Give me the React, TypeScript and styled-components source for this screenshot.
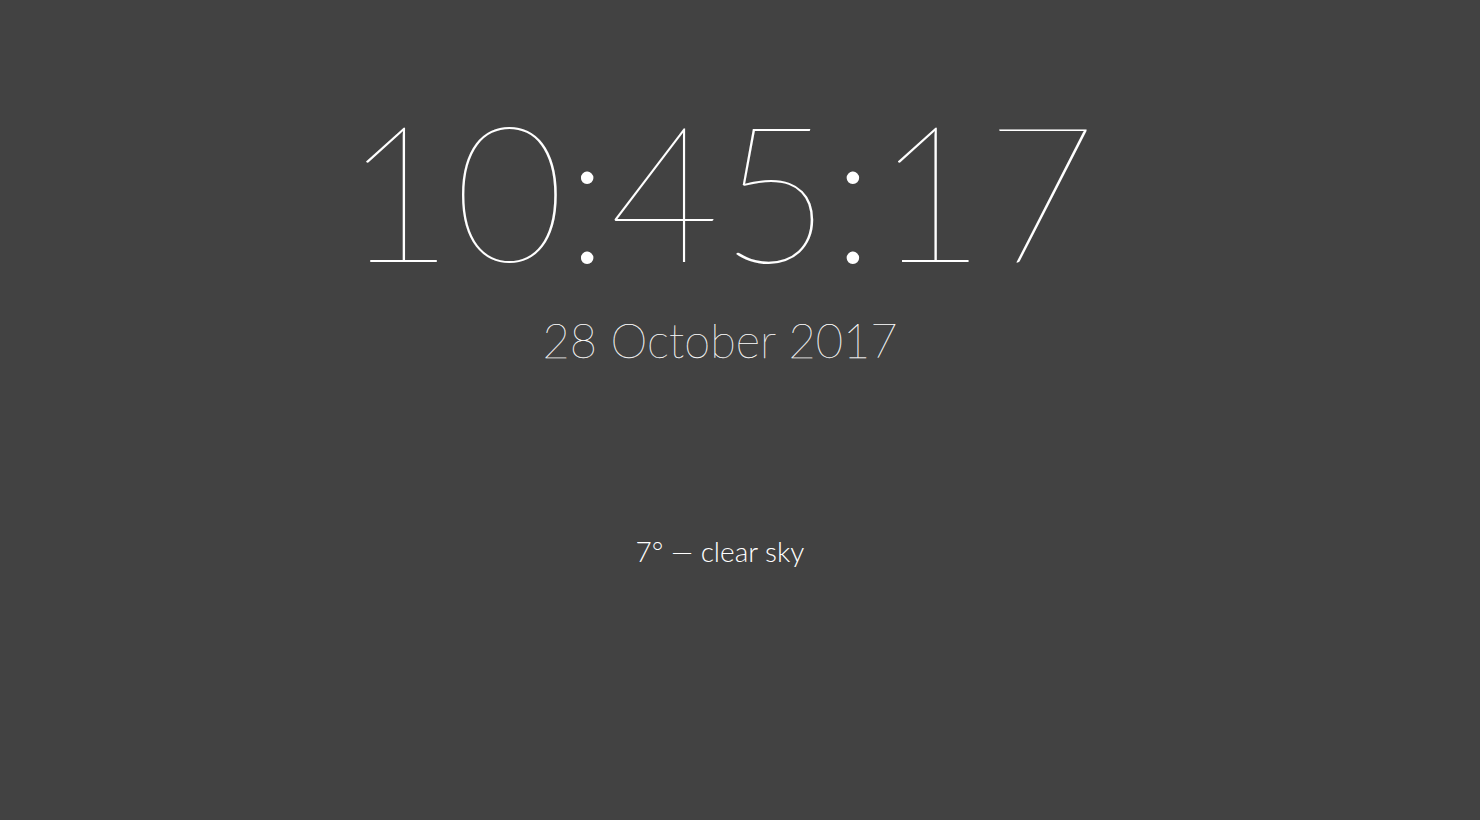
import React from 'react';
import styled, { createGlobalStyle } from 'styled-components';

const GlobalStyle = createGlobalStyle`
  html, body {
    margin: 0;
    padding: 0;
    height: 100%;
    background: #424242;
  }
  body {
    font-family: Lato, "Open Sans", sans-serif;
    color: #ffffff;
  }
`;

const Screen = styled.main`
  width: 1440px;
  height: 820px;
  display: flex;
  flex-direction: column;
  align-items: center;
  background: #424242;
`;

const Clock = styled.div`
  margin-top: 93px;
  font-size: 191px;
  font-weight: 100;
  line-height: 1;
`;

const DateLine = styled.div`
  margin-top: 33px;
  font-size: 47px;
  font-weight: 200;
  line-height: 1;
  color: #ffffff;
  -webkit-text-stroke: 0.25px #ffffff;
`;

const Weather = styled.div`
  margin-top: 173px;
  font-size: 28px;
  font-weight: 300;
  line-height: 1;
`;

export default function App() {
  return (
    <>
      <GlobalStyle />
      <Screen>
        <Clock>10:45:17</Clock>
        <DateLine>28 October 2017</DateLine>
        <Weather>7° — clear sky</Weather>
      </Screen>
    </>
  );
}
